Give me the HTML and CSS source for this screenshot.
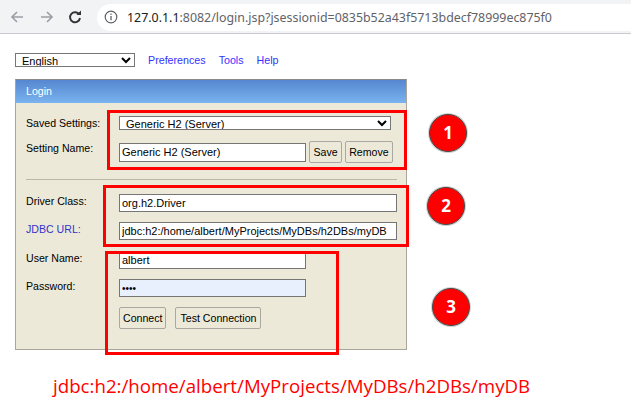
FILE: index.html
```html
<!DOCTYPE html>
<html>
<head>
<meta charset="utf-8">
<title>H2 Console</title>
<link rel="stylesheet" href="styles.css">
</head>
<body>
<div class="chrome">
  <div class="navbtns">
    <svg class="nav back" width="14" height="14" viewBox="0 0 14 14"><path d="M13 7H2M7 2L2 7l5 5" fill="none" stroke="#9aa0a6" stroke-width="1.6"/></svg>
    <svg class="nav fwd" width="14" height="14" viewBox="0 0 14 14"><path d="M1 7h11M7 2l5 5-5 5" fill="none" stroke="#9aa0a6" stroke-width="1.6"/></svg>
    <svg class="nav reload" width="14" height="14" viewBox="0 0 14 14"><path d="M11.3 4.6A5 5 0 1 0 12 8" fill="none" stroke="#333" stroke-width="1.9"/><path d="M8.4 4.9H13V0.4z" fill="#333"/></svg>
  </div>
  <div class="omnibox">
    <svg class="info" width="14" height="14" viewBox="0 0 14 14"><circle cx="7" cy="7" r="5.8" fill="none" stroke="#5f6368" stroke-width="1.2"/><rect x="6.35" y="6" width="1.3" height="4.2" fill="#5f6368"/><rect x="6.35" y="3.6" width="1.3" height="1.3" fill="#5f6368"/></svg>
    <span class="url"><span class="host">127.0.1.1</span>:8082/login.jsp?jsessionid=0835b52a43f5713bdecf78999ec875f0</span>
  </div>
</div>

<div class="page">
  <div class="topnav">
    <select class="lang"><option>English</option></select>
    <a class="link" href="#">Preferences</a>
    <a class="link" href="#">Tools</a>
    <a class="link" href="#">Help</a>
  </div>

  <div class="panel">
    <div class="panel-head">Login</div>
    <div class="panel-body">
      <div class="row r-saved">
        <label class="lbl">Saved Settings:</label>
        <select class="saved"><option>Generic H2 (Server)</option></select>
      </div>
      <div class="row r-name">
        <label class="lbl">Setting Name:</label>
        <div class="ctl">
          <input class="inp short name" type="text" value="Generic H2 (Server)">
          <button class="btn save">Save</button>
          <button class="btn">Remove</button>
        </div>
      </div>
      <div class="sep"></div>
      <div class="row r-driver">
        <label class="lbl">Driver Class:</label>
        <input class="inp long" type="text" value="org.h2.Driver">
      </div>
      <div class="row r-url">
        <label class="lbl blue">JDBC URL:</label>
        <input class="inp long" type="text" value="jdbc:h2:/home/albert/MyProjects/MyDBs/h2DBs/myDB">
      </div>
      <div class="row r-user">
        <label class="lbl">User Name:</label>
        <input class="inp short" type="text" value="albert">
      </div>
      <div class="row r-pass">
        <label class="lbl">Password:</label>
        <input class="inp short pass" type="password" value="sasa">
      </div>
      <div class="row r-btns">
        <span class="lbl"></span>
        <div class="ctl gap9">
          <button class="btn">Connect</button>
          <button class="btn test">Test Connection</button>
        </div>
      </div>
    </div>
  </div>

  <div class="caption">jdbc:h2:/home/albert/MyProjects/MyDBs/h2DBs/myDB</div>
</div>

<div class="box box1"></div>
<div class="box box2"></div>
<div class="box box3"></div>
<div class="badge b1">1</div>
<div class="badge b2">2</div>
<div class="badge b3">3</div>
</body>
</html>
```

FILE: styles.css
```css
html, body {
  margin: 0;
  padding: 0;
  background: #ffffff;
}
body {
  position: relative;
  width: 631px;
  height: 413px;
  overflow: hidden;
  font-family: "Liberation Sans", Arial, sans-serif;
}

/* browser chrome */
.chrome {
  height: 33px;
  background: #f1f3f4;
  border-bottom: 1px solid #c9cbce;
  display: flex;
  align-items: center;
}
.navbtns {
  display: flex;
  align-items: center;
  width: 97px;
  padding-left: 10px;
  box-sizing: border-box;
}
.nav { display: block; }
.fwd { margin-left: 16px; }
.reload { margin-left: 14px; }
.omnibox {
  flex: 1;
  height: 27px;
  margin-top: 1px;
  background: #ffffff;
  border-radius: 14px 0 0 14px;
  display: flex;
  align-items: center;
  padding-left: 7px;
}
.info { display: block; }
.url {
  margin-left: 9px;
  font-family: "Noto Sans", sans-serif;
  font-size: 12.4px;
  color: #5f6368;
  white-space: nowrap;
}
.host { color: #202124; }

/* page */
.page {
  padding: 19px 0 0 15px;
}
.topnav {
  display: flex;
  align-items: center;
  height: 14px;
  font-size: 10.7px;
}
.lang {
  width: 120px;
  height: 14px;
  padding: 0 0 0 2px;
  margin: 0;
  font-family: "Liberation Sans", Arial, sans-serif;
  font-size: 11px;
  border: 1px solid #767676;
  border-radius: 0;
  background: #fff;
  color: #000;
}
.link {
  color: #3333ff;
  text-decoration: none;
  margin-left: 13px;
}

.panel {
  margin-top: 12px;
  width: 392px;
  box-sizing: border-box;
  border: 1px solid #a8a69c;
  border-top-color: #8a8a8a;
  background: #ece9d8;
}
.panel-head {
  height: 23px;
  line-height: 23px;
  padding-left: 10px;
  color: #ffffff;
  font-size: 10.6px;
  background: linear-gradient(#5587d0, #7ab3ef);
}
.panel-body {
  padding: 13px 0 20px 10px;
  font-size: 10.6px;
  color: #000;
}
.row {
  display: flex;
  align-items: flex-start;
}
.lbl {
  display: block;
  width: 93px;
  flex: none;
  padding-top: 1px;
  line-height: 12px;
  color: #000;
}
.lbl.blue { color: #3333cc; }
.ctl {
  display: flex;
  align-items: center;
  gap: 3px;
}
.ctl.gap9 { gap: 9px; }

.saved {
  width: 272px;
  height: 14px;
  margin: 0;
  padding: 0 0 0 2px;
  font-family: "Liberation Sans", Arial, sans-serif;
  font-size: 11px;
  border: 1px solid #767676;
  border-radius: 0;
  background: #fff;
  color: #000;
}
.inp {
  box-sizing: border-box;
  height: 18px;
  margin: 0;
  padding: 0 2px;
  font-family: "Liberation Sans", Arial, sans-serif;
  font-size: 11px;
  color: #000;
  border: 1px solid #767676;
  border-radius: 0;
  background: #fff;
  outline: none;
}
.inp.short { width: 187px; }
.inp.long { width: 278px; }
.inp.name { height: 19px; }
.inp.pass { background: #e8f0fe; font-size: 10px; letter-spacing: 0; }
.btn {
  box-sizing: border-box;
  height: 22px;
  margin: 0;
  padding: 0 3px;
  font-family: "Liberation Sans", Arial, sans-serif;
  font-size: 10.6px;
  color: #000;
  background: #ece9d8;
  border: 1px solid #a9a8a2;
  border-radius: 2px;
}
.btn.save { padding: 0 3.5px; }
.btn.test { padding: 0 4px; }

.r-name { margin-top: 11px; }
.sep {
  height: 0;
  border-top: 1px solid #b9b7ac;
  width: 371px;
  margin-top: 16px;
}
.r-driver { margin-top: 14px; }
.r-url { margin-top: 10px; }
.r-user { margin-top: 11px; }
.r-pass { margin-top: 10px; }
.r-btns { margin-top: 10px; }

.caption {
  margin-top: 25px;
  padding-left: 38px;
  font-family: "Open Sans", "Noto Sans", sans-serif;
  font-size: 18.7px;
  line-height: 22px;
  color: #ff0000;
  white-space: nowrap;
}

/* annotations */
.box {
  position: absolute;
  box-sizing: border-box;
  border: 3px solid #ff0000;
}
.box1 { left: 107px; top: 110px; width: 300px; height: 60px; }
.box2 { left: 103px; top: 185px; width: 306px; height: 62px; }
.box3 { left: 105px; top: 251px; width: 234px; height: 104px; }
.badge {
  position: absolute;
  width: 38px;
  height: 38px;
  box-sizing: border-box;
  border-radius: 50%;
  background: #ff0000;
  border: 1px solid #4a4a4a;
  box-shadow: 0 0 0 1px #d0d0d0;
  color: #fff;
  font-family: "Open Sans", "DejaVu Sans", sans-serif;
  font-weight: 700;
  font-size: 17px;
  line-height: 36px;
  text-align: center;
}
.b1 { left: 429px; top: 114px; }
.b2 { left: 427px; top: 187px; }
.b3 { left: 432px; top: 288px; }
```
